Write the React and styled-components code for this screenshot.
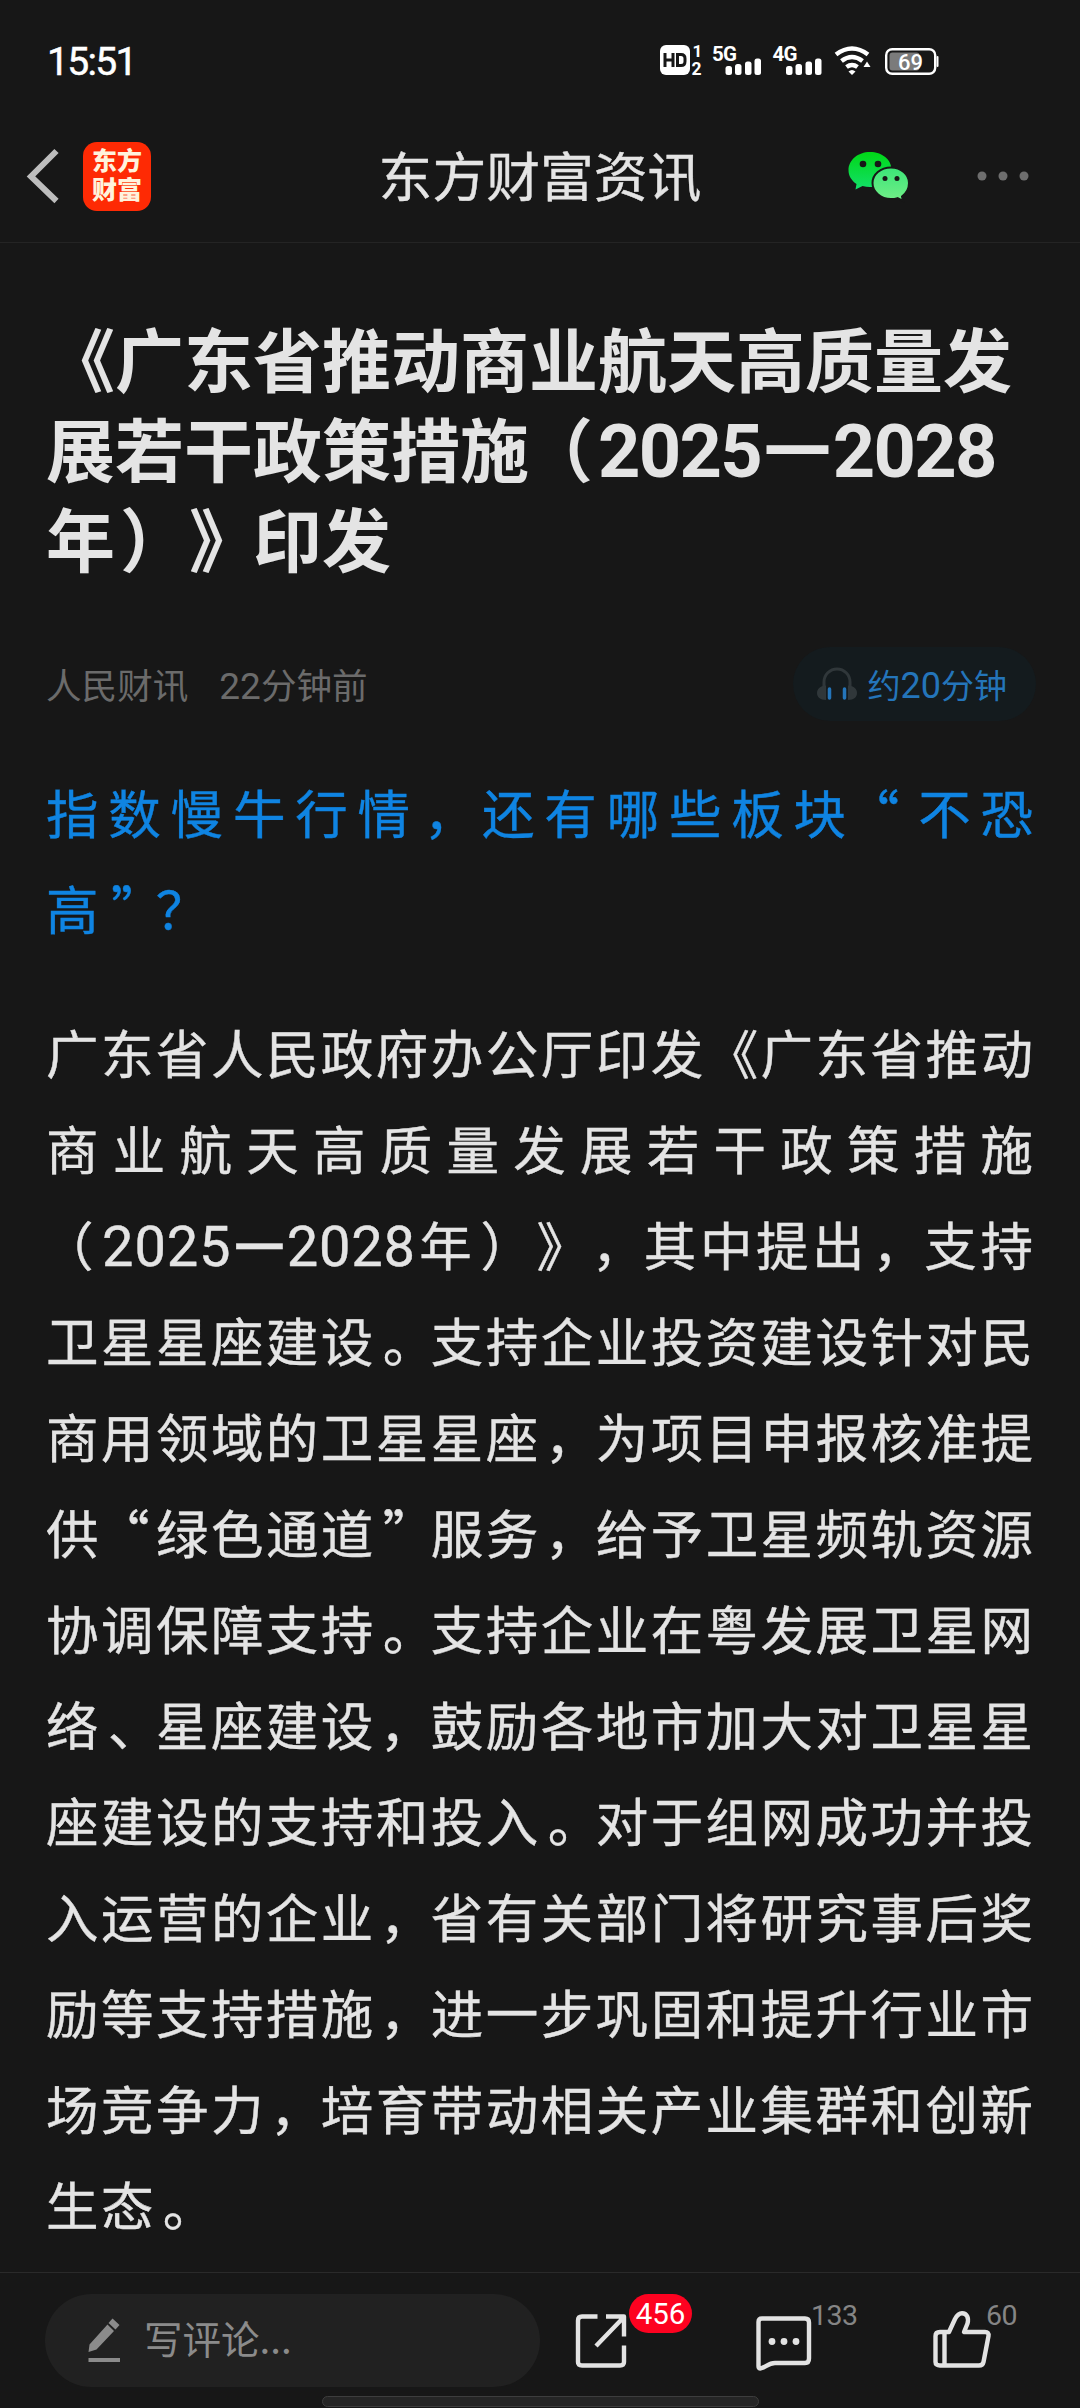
import React from "react";
import styled, { createGlobalStyle, css } from "styled-components";

const GlobalStyle = createGlobalStyle`
    * {
        box-sizing: border-box;
    }

    body {
        margin: 0;
        background: #171717;
        color: #e4e4e4;
        font-family: "Noto Sans CJK SC", "Noto Sans", sans-serif;
        text-spacing-trim: space-all;
        text-autospace: no-autospace;
    }

    svg {
        display: block;
        flex: none;
        overflow: visible;
    }
`;

const Page = styled.div`
    position: relative;
    display: flex;
    flex-direction: column;
    width: 1080px;
    height: 2408px;
    overflow: hidden;
    background: #171717;
`;

const StatusBar = styled.div`
    display: flex;
    flex: none;
    align-items: center;
    justify-content: space-between;
    height: 110px;
    padding: 12px 141px 0 47px;
    color: #fff;
`;

const Clock = styled.div`
    padding-top: 2px;
    font: 400 39px/40px Roboto, sans-serif;
    letter-spacing: -1.7px;
    -webkit-text-stroke: 0.5px #fff;
`;

const NavBar = styled.header`
    display: flex;
    flex: none;
    align-items: center;
    height: 133px;
    border-bottom: 1px solid #242424;
`;

const NavSide = styled.div`
    display: flex;
    align-items: center;
    flex: 1;
    gap: ${({ $gap }) => $gap}px;
    padding: 0 51px 0 27px;
    justify-content: ${({ $end }) => ($end ? "flex-end" : "flex-start")};
`;

const AppLogo = styled.div`
    display: flex;
    flex-direction: column;
    align-items: center;
    justify-content: center;
    width: 68px;
    height: 69px;
    padding-bottom: 4px;
    border-radius: 14px;
    background: #fe2a04;
    color: #fff3dc;
    font-size: 25px;
    font-weight: 900;
    line-height: 29px;
`;

const NavTitle = styled.h1`
    margin: 0;
    padding-bottom: 4px;
    font-size: 53.8px;
    font-weight: 400;
    line-height: 60px;
    -webkit-text-stroke: 0.4px currentColor;
`;

const Article = styled.main`
    flex: 1;
    min-height: 0;
    padding: 69px 46px 0;
`;

const Headline = styled.h2`
    margin: 0;
    font-size: 69px;
    font-weight: 700;
    line-height: 90px;
`;

const HeadLine = styled.div`
    height: 90px;
    white-space: nowrap;
`;

const Num = styled.span`
    font-family: Roboto, sans-serif;
    line-height: 0;
    font-size: ${({ $size }) => $size || "1em"};
    letter-spacing: ${({ $spacing }) => $spacing || 0}px;
`;

const Dash = styled(Num)`
    font-weight: ${({ $weight }) => $weight};
    vertical-align: -5px;
`;

// nudges a punctuation mark inside its full-width cell
const Mark = styled.span`
    margin-left: ${({ $x }) => $x}px;
    margin-right: ${({ $x }) => -$x}px;
`;

const Meta = styled.div`
    display: flex;
    align-items: center;
    height: 74px;
    margin: 65px 0 42px;
    color: #6b6b6b;
    font-size: 35.6px;
    line-height: 40px;
`;

const Source = styled.span`
    margin-right: 31px;
`;

const ListenPill = styled.div`
    display: flex;
    align-items: center;
    gap: 11px;
    height: 74px;
    margin: 0 -2px 0 auto;
    padding: 0 29px 0 24px;
    border-radius: 38px;
    background: #141b1e;
    color: #2475ba;
    font-size: 33px;
    line-height: 40px;
`;

const Paragraph = styled.div`
    margin-bottom: 48px;
    font-size: 52.5px;
    line-height: 96px;
    color: ${({ $link }) => ($link ? "#0f84e2" : "inherit")};
    -webkit-text-stroke: 0.4px currentColor;
`;

const Line = styled.div`
    height: 96px;
    margin-right: 1px;
    ${({ $last }) =>
        $last
            ? css`
                letter-spacing: 2.4px;
                white-space: nowrap;
            `
            : css`
                text-align: justify;
                text-align-last: justify;
            `}
`;

const BottomBar = styled.footer`
    display: flex;
    flex: none;
    align-items: flex-start;
    height: 136px;
    padding: 21px 0 0 45px;
    border-top: 1px solid #2a2a2a;
    background: #171717;
`;

const CommentBox = styled.div`
    display: flex;
    align-items: center;
    width: 495px;
    height: 93px;
    padding-left: 43px;
    gap: 23px;
    border-radius: 47px;
    background: #212121;
    color: #8b8b8b;
    font-size: 38.5px;
    line-height: 44px;
`;

const Placeholder = styled.span`
    padding-bottom: 8px;
`;

const Action = styled.div`
    position: relative;
    width: 58px;
    height: 60px;
    margin: 16px 0 0 ${({ $left }) => $left}px;
`;

const Count = styled.span`
    position: absolute;
    left: ${({ $left }) => $left}px;
    top: -9px;
    color: #858585;
    font: 400 28.5px/30px Roboto, sans-serif;
    letter-spacing: -0.5px;
`;

const Badge = styled.span`
    position: absolute;
    left: 55px;
    top: -16px;
    width: 63px;
    height: 39px;
    border-radius: 20px;
    background: #fd0220;
    color: #fff;
    text-align: center;
    font: 400 29.5px/40px Roboto, sans-serif;
`;

const GestureBar = styled.div`
    position: absolute;
    left: 322px;
    bottom: 1px;
    width: 437px;
    height: 11px;
    border: 1px solid #3d3d3d;
    border-radius: 6px;
    background: #252525;
`;

const signalText = {
    fill: "#fff",
    fontFamily: "Roboto, sans-serif",
    fontWeight: 700,
};

const Signal = ({ x, label }) => (
    <g transform={`translate(${x} 0)`}>
        <text x="-1" y="15.5" fontSize="20.5" textLength="25" {...signalText}>{label}</text>
        <rect x="12.500" y="21" width="6.500" height="9" rx="2.500" />
        <rect x="22" y="19" width="6.500" height="11" rx="2.500" />
        <rect x="32" y="16.500" width="6.500" height="13.500" rx="2.500" />
        <rect x="41.500" y="13.500" width="6.500" height="16.500" rx="2.500" />
    </g>
);

const StatusIcons = () => (
    <svg width="279" height="32" viewBox="0 0 279 32" fill="#fff">
        <rect x="0" y="0" width="30" height="30" rx="6" />
        <path d="M5 8v14M13 8v14M5 15h8M17.500 9.500h3.500q4 0 4 4v3q0 4-4 4h-3.500z" fill="none" stroke="#171717" strokeWidth="3" />
        <text x="32.500" y="12" fontSize="17" {...signalText}>1</text>
        <text x="31.500" y="29.500" fontSize="17.500" {...signalText}>2</text>
        <Signal x={53} label="5G" />
        <Signal x={113.5} label="4G" />
        <g fill="none" stroke="#fff" strokeWidth="4.500">
            <path d="M176 9.500Q192 -2.500 208 9.500" />
            <path d="M181.500 16Q192 8 202.500 16" />
            <path d="M186.500 22Q192 18 197.500 22" />
        </g>
        <path d="M188.500 26.500Q192 23.500 195.500 26.500L192 30z" />
        <path d="M207 16.500l3.500 5.500h-7z" />
        <rect x="226.200" y="4.200" width="49" height="24.600" rx="6" fill="none" stroke="#fff" strokeWidth="2.400" />
        <rect x="229.500" y="7.500" width="30" height="18" rx="3" fill="#7b7b7b" />
        <text x="238" y="24.500" fontSize="22" textLength="25" fill="#fff" fontFamily="Roboto, sans-serif" fontWeight="500">69</text>
        <path d="M277.500 12v9" stroke="#fff" strokeWidth="2" strokeLinecap="round" />
    </svg>
);

const BackIcon = () => (
    <svg width="32" height="56" viewBox="0 0 32 56" fill="none" stroke="#bdbdbd" strokeWidth="6">
        <path d="M29.500 3L4 28.500L29.500 53" />
    </svg>
);

const WechatIcon = () => (
    <svg width="62" height="50" viewBox="0 0 62 50">
        <defs>
            <linearGradient id="bubbleBack" x1="0" y1="0" x2="0" y2="1">
                <stop offset="0" stopColor="#00d716" />
                <stop offset="1" stopColor="#13e06a" />
            </linearGradient>
            <linearGradient id="bubbleFront" x1="0" y1="0" x2="0" y2="1">
                <stop offset="0" stopColor="#3be577" />
                <stop offset="1" stopColor="#72ee88" />
            </linearGradient>
        </defs>
        <path d="M22 1C10 1 .5 9 .5 19c0 6 3 10.500 8 14L7.500 38.500l7-3.500c2.500.7 5 1 7.500 1 12 0 21.500-7.500 21.500-17.500S34 1 22 1z" fill="url(#bubbleBack)" />
        <path d="M43 16.500c-10.500 0-18.500 7-18.500 15.500S32.500 48 43 48c2.500 0 4.500-.3 6.500-.9L55 50l-1-4.500c4-3 7-8 7-13.500 0-8.500-8-15.500-18-15.500z" fill="url(#bubbleFront)" stroke="#171717" strokeWidth="2" />
        <g fill="#171717">
            <circle cx="15" cy="13" r="3.300" />
            <circle cx="30" cy="13" r="3.300" />
            <circle cx="37" cy="27.500" r="2.500" />
            <circle cx="49" cy="27.500" r="2.500" />
        </g>
    </svg>
);

const MoreIcon = () => (
    <svg width="52" height="10" viewBox="0 0 52 10" fill="#6e6e6e">
        <circle cx="5" cy="5" r="4.500" />
        <circle cx="26" cy="5" r="4.500" />
        <circle cx="47" cy="5" r="4.500" />
    </svg>
);

const HeadphoneIcon = () => (
    <svg width="40" height="34" viewBox="0 0 40 34">
        <path d="M7 21V15a13 13 0 0 1 26 0v6" fill="none" stroke="#30373a" strokeWidth="3" />
        <path d="M9 18.500V33C3 33 0 30 0 26s3-7 9-7.500zM31 18.500V33c6 0 9-3 9-7s-3-7-9-7.500z" fill="#30373a" />
        <path d="M12.500 22v9M27.500 22v9" stroke="#2475ba" strokeWidth="3.500" strokeLinecap="round" />
    </svg>
);

const PenIcon = () => (
    <svg width="33" height="45" viewBox="0 0 33 45" fill="#8b8b8b">
        <path d="M24.500 0.500l7 6.500-4 4.500-7-6.500zM19.500 6.500l6.500 6.500L8.500 31.500 0.500 34l1-7.500z" />
        <rect x="0.500" y="40" width="31.500" height="4" />
    </svg>
);

const ShareIcon = () => (
    <svg width="58" height="60" viewBox="0 0 58 60" fill="none" stroke="#e3e3e3" strokeWidth="4.400">
        <path d="M23.500 6.500H8Q4 6.500 4 10.500V52Q4 55.500 8 55.500H46Q50 55.500 50 52V35.500" />
        <path d="M32 6.500H50V26.500M49 8L22 36" strokeLinejoin="round" />
    </svg>
);

const ChatIcon = () => (
    <svg width="58" height="62" viewBox="0 0 58 62">
        <path d="M7 8.500H50Q54 8.500 54 12.500V48.500Q54 53 50 53H20C13 53 10 58 5 58.500Q3.500 58.500 3.500 56V12Q3.500 8.500 7 8.500z" fill="none" stroke="#e3e3e3" strokeWidth="4.400" />
        <g fill="#e3e3e3">
            <circle cx="17" cy="31.500" r="3.400" />
            <circle cx="29" cy="31.500" r="3.400" />
            <circle cx="41" cy="31.500" r="3.400" />
        </g>
    </svg>
);

const LikeIcon = () => (
    <svg width="60" height="60" viewBox="0 0 60 60" fill="none" stroke="#e3e3e3" strokeWidth="4.400" strokeLinejoin="round">
        <path d="M8 22H17L23 9Q26 3.200 30 3.200C35 3.200 37 8 35.500 13.500L32 22H53Q57 22 56.500 26L51.500 52Q50.800 55.500 47 55.500H8Q3.500 55.500 3.500 52V26Q3.500 22 8 22zM12.500 22V55" />
    </svg>
);

const marks = { "，": 4, "。": 7, "、": 7, "“": -4, "”": 7, "（": -5, "）": 5, "》": 5 };

// splits a string so that every punctuation mark gets its own nudge
const Text = ({ children }) =>
    children.split(/([，。、“”（）》])/).map((part, i) =>
        marks[part] ? <Mark key={i} $x={marks[part]}>{part}</Mark> : part
    );

const bodyLines = [
    "广东省人民政府办公厅印发《广东省推动",
    "商业航天高质量发展若干政策措施",
    <>
        <Text>（</Text><Num $size="56px" $spacing={0.8}>2025</Num><Dash $size="71px" $weight={400}>—</Dash><Num $size="56px" $spacing={0.8}>2028</Num><Text>年）》，其中提出，支持</Text>
    </>,
    "卫星星座建设。支持企业投资建设针对民",
    "商用领域的卫星星座，为项目申报核准提",
    "供“绿色通道”服务，给予卫星频轨资源",
    "协调保障支持。支持企业在粤发展卫星网",
    "络、星座建设，鼓励各地市加大对卫星星",
    "座建设的支持和投入。对于组网成功并投",
    "入运营的企业，省有关部门将研究事后奖",
    "励等支持措施，进一步巩固和提升行业市",
    "场竞争力，培育带动相关产业集群和创新",
    "生态。",
];

const App = () => {
    return (
        <Page lang="zh-CN">
            <GlobalStyle />
            <StatusBar>
                <Clock>15:51</Clock>
                <StatusIcons />
            </StatusBar>
            <NavBar>
                <NavSide $gap={24}>
                    <BackIcon />
                    <AppLogo>
                        <span>东方</span>
                        <span>财富</span>
                    </AppLogo>
                </NavSide>
                <NavTitle>东方财富资讯</NavTitle>
                <NavSide $gap={67} $end>
                    <WechatIcon />
                    <MoreIcon />
                </NavSide>
            </NavBar>
            <Article>
                <Headline>
                    <HeadLine>《广东省推动商业航天高质量发</HeadLine>
                    <HeadLine>
                        展若干政策措施<Text>（</Text><Num $size="74px" $spacing={-1.7}>2025</Num><Dash $size="93px" $weight={500}>—</Dash><Num $size="74px" $spacing={-1.7}>2028</Num>
                    </HeadLine>
                    <HeadLine><Text>年）》印发</Text></HeadLine>
                </Headline>
                <Meta>
                    <Source>人民财讯</Source>
                    <span><Num $size="37px">22</Num>分钟前</span>
                    <ListenPill>
                        <HeadphoneIcon />
                        <span>约<Num $size="36px">20</Num>分钟</span>
                    </ListenPill>
                </Meta>
                <Paragraph $link>
                    <Line><Text>指数慢牛行情，还有哪些板块</Text><Mark $x={-9}>“</Mark>不恐</Line>
                    <Line $last>高<Mark $x={10}>”</Mark>？</Line>
                </Paragraph>
                <Paragraph>
                    {bodyLines.map((line, i) => (
                        <Line key={i} $last={i === bodyLines.length - 1}>
                            {typeof line === "string" ? <Text>{line}</Text> : line}
                        </Line>
                    ))}
                </Paragraph>
            </Article>
            <BottomBar>
                <CommentBox>
                    <PenIcon />
                    <Placeholder>写评论...</Placeholder>
                </CommentBox>
                <Action $left={34}>
                    <ShareIcon />
                    <Badge>456</Badge>
                </Action>
                <Action $left={123}>
                    <ChatIcon />
                    <Count $left={56}>133</Count>
                </Action>
                <Action $left={119}>
                    <LikeIcon />
                    <Count $left={54}>60</Count>
                </Action>
            </BottomBar>
            <GestureBar />
        </Page>
    );
};

export default App;
